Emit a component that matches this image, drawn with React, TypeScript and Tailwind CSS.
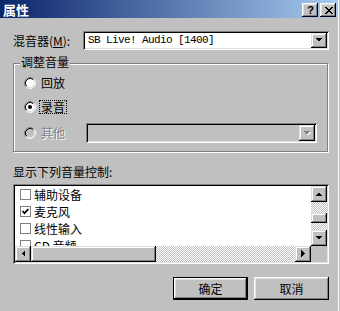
import React from "react";

const raised =
  "shadow-[inset_-1px_-1px_0_#000,inset_1px_1px_0_#fff,inset_-2px_-2px_0_#808080,inset_2px_2px_0_#dfdfdf]";
const raisedScroll =
  "shadow-[inset_-1px_-1px_0_#000,inset_1px_1px_0_#dfdfdf,inset_-2px_-2px_0_#808080,inset_2px_2px_0_#fff]";
const sunken =
  "shadow-[inset_1px_1px_0_#808080,inset_-1px_-1px_0_#fff,inset_2px_2px_0_#000,inset_-2px_-2px_0_#dfdfdf]";
const dither =
  "[background-image:repeating-conic-gradient(#fff_0%_25%,#c0c0c0_0%_50%)] [background-size:2px_2px]";

function Tri({ dir, disabled }: { dir: "up" | "down" | "left" | "right"; disabled?: boolean }) {
  const pts: Record<string, string> = {
    down: "0,0 7,0 3.5,3.5",
    up: "0,4 7,4 3.5,0.5",
    left: "4,0 4,7 0.5,3.5",
    right: "0,0 0,7 3.5,3.5",
  };
  const horiz = dir === "left" || dir === "right";
  const w = horiz ? 5 : 8;
  const h = horiz ? 8 : 5;
  return (
    <svg width={w} height={h} viewBox={`0 0 ${w} ${h}`} shapeRendering="crispEdges">
      {disabled && <polygon points={pts[dir]} fill="#fff" transform="translate(1,1)" />}
      <polygon points={pts[dir]} fill={disabled ? "#808080" : "#000"} />
    </svg>
  );
}

function Radio({ checked, disabled }: { checked?: boolean; disabled?: boolean }) {
  return (
    <svg width="12" height="12" viewBox="0 0 12 12" className="shrink-0">
      <circle cx="6" cy="6" r="4.5" fill={disabled ? "#c0c0c0" : "#fff"} />
      <path d="M2.11 9.89 A5.5 5.5 0 0 1 9.89 2.11" stroke="#808080" fill="none" />
      <path d="M9.89 2.11 A5.5 5.5 0 0 1 2.11 9.89" stroke="#fff" fill="none" />
      <path d="M2.82 9.18 A4.5 4.5 0 0 1 9.18 2.82" stroke="#000" fill="none" />
      <path d="M9.18 2.82 A4.5 4.5 0 0 1 2.82 9.18" stroke="#dfdfdf" fill="none" />
      {checked && <circle cx="6" cy="6" r="2" fill="#000" />}
    </svg>
  );
}

function Check({ checked }: { checked?: boolean }) {
  return (
    <div className="w-[11px] h-[11px] shrink-0 border border-[#808080] bg-white flex items-center justify-center">
      {checked && (
        <svg width="9" height="9" viewBox="0 0 9 9">
          <polyline points="1.5,4 3.5,6.2 7.5,2" fill="none" stroke="#000" strokeWidth="1.7" />
        </svg>
      )}
    </div>
  );
}

function CloseGlyph() {
  const r: [number, number, number][] = [
    [0, 0, 2], [6, 0, 2],
    [1, 1, 2], [5, 1, 2],
    [2, 2, 4],
    [3, 3, 2],
    [2, 4, 4],
    [1, 5, 2], [5, 5, 2],
    [0, 6, 2], [6, 6, 2],
  ];
  return (
    <svg width="8" height="7" viewBox="0 0 8 7" shapeRendering="crispEdges">
      {r.map(([x, y, w], i) => (
        <rect key={i} x={x} y={y} width={w} height={1} fill="#000" />
      ))}
    </svg>
  );
}

export default function App() {
  const items: [string, boolean][] = [
    ["辅助设备", false],
    ["麦克风", true],
    ["线性输入", false],
    ["CD 音频", false],
  ];
  return (
    <div className="w-[340px] h-[311px] bg-[#c0c0c0] overflow-hidden flex flex-col font-['Noto_Sans_CJK_SC',sans-serif] text-[12px] text-black shadow-[inset_-1px_0_0_#c0c0c0,inset_-2px_0_0_#fff]">
      {/* Title bar */}
      <div className="w-[337px] h-[18px] shrink-0 flex items-start bg-[linear-gradient(to_right,#0a246a,#a6caf0)] pl-[3px] pt-[3px] pr-[1px]">
        <span className="text-white font-bold text-[13px] leading-[13px]">属性</span>
        <div className="ml-auto flex gap-[2px]">
          <div className={`w-[16px] h-[14px] bg-[#c0c0c0] ${raised} flex items-center justify-center`}>
            <span className="font-['Liberation_Sans',sans-serif] font-bold text-[11px] leading-[11px] pl-[1px]">?</span>
          </div>
          <div className={`w-[16px] h-[14px] bg-[#c0c0c0] ${raised} flex items-center justify-center pl-[1px]`}>
            <CloseGlyph />
          </div>
        </div>
      </div>

      <div className="flex flex-col pl-[13px]">
        {/* Mixer row */}
        <div className="mt-[13px] flex items-center h-[19px]">
          <span className="w-[70px] leading-[14px]">
            混音器(<span className="underline">M</span>):
          </span>
          <div className={`w-[246px] h-[19px] p-[2px] bg-white ${sunken} flex`}>
            <span className="flex-1 pl-[3px] font-['Liberation_Mono',monospace] text-[11px] tracking-[-0.6px] leading-[15px] whitespace-nowrap">
              SB Live! Audio [1400]
            </span>
            <div className={`w-[16px] h-[15px] bg-[#c0c0c0] ${raisedScroll} flex items-center justify-center`}>
              <Tri dir="down" />
            </div>
          </div>
        </div>

        {/* Group box */}
        <div className="relative mt-[13px] w-[315px] h-[89px] border border-[#808080] shadow-[inset_1px_1px_0_#fff,1px_1px_0_#fff] pl-[10px] pt-[11px] flex flex-col gap-[8px]">
          <span className="absolute left-[6px] top-[-9px] px-[1px] bg-[#c0c0c0] leading-[14px]">调整音量</span>
          <div className="flex items-center h-[16px]">
            <Radio />
            <span className="ml-[3px] border border-transparent px-[1px] leading-[12px]">回放</span>
          </div>
          <div className="flex items-center h-[16px]">
            <Radio checked />
            <span className="ml-[3px] border border-dotted border-black px-[1px] leading-[12px]">录音</span>
          </div>
          <div className="flex items-center h-[20px]">
            <Radio disabled />
            <span className="ml-[3px] border border-transparent px-[1px] leading-[12px] text-[#808080] [text-shadow:1px_1px_0_#fff]">
              其他
            </span>
            <div className={`ml-[19px] w-[231px] h-[20px] p-[2px] bg-[#c0c0c0] ${sunken} flex justify-end`}>
              <div className={`w-[16px] h-[16px] bg-[#c0c0c0] ${raisedScroll} flex items-center justify-center`}>
                <Tri dir="down" disabled />
              </div>
            </div>
          </div>
        </div>

        <div className="mt-[13px] h-[14px] leading-[14px]">显示下列音量控制:</div>

        {/* List */}
        <div className={`mt-[5px] w-[316px] h-[80px] p-[2px] bg-[#c0c0c0] ${sunken} grid grid-cols-[1fr_16px] grid-rows-[1fr_16px]`}>
          <div className="bg-white overflow-hidden flex flex-col pl-[5px]">
            {items.map(([t, c]) => (
              <div key={t} className="h-[17px] shrink-0 flex items-center gap-[3px]">
                <Check checked={c} />
                <span className="leading-[14px] whitespace-nowrap">{t}</span>
              </div>
            ))}
          </div>
          <div className="flex flex-col">
            <div className={`h-[16px] shrink-0 bg-[#c0c0c0] ${raisedScroll} flex items-center justify-center`}>
              <Tri dir="up" />
            </div>
            <div className={`flex-1 ${dither} pt-[11px]`}>
              <div className={`h-[10px] bg-[#c0c0c0] ${raisedScroll}`} />
            </div>
            <div className={`h-[16px] shrink-0 bg-[#c0c0c0] ${raisedScroll} flex items-center justify-center`}>
              <Tri dir="down" />
            </div>
          </div>
          <div className="flex">
            <div className={`w-[16px] shrink-0 bg-[#c0c0c0] ${raisedScroll} flex items-center justify-center`}>
              <Tri dir="left" />
            </div>
            <div className={`flex-1 ${dither} flex`}>
              <div className={`w-[125px] bg-[#c0c0c0] ${raisedScroll}`} />
            </div>
            <div className={`w-[16px] shrink-0 bg-[#c0c0c0] ${raisedScroll} flex items-center justify-center`}>
              <Tri dir="right" />
            </div>
          </div>
          <div className="bg-[#c0c0c0]" />
        </div>

        {/* Buttons */}
        <div className="mt-[13px] w-[316px] flex justify-end gap-[6px]">
          <div className="w-[75px] h-[23px] border border-black bg-[#c0c0c0] shadow-[inset_-1px_-1px_0_#000,inset_1px_1px_0_#fff,inset_-2px_-2px_0_#808080,inset_2px_2px_0_#dfdfdf] flex items-center justify-center leading-[14px]">
            确定
          </div>
          <div className={`w-[75px] h-[23px] bg-[#c0c0c0] ${raised} flex items-center justify-center leading-[14px]`}>
            取消
          </div>
        </div>
      </div>
    </div>
  );
}
